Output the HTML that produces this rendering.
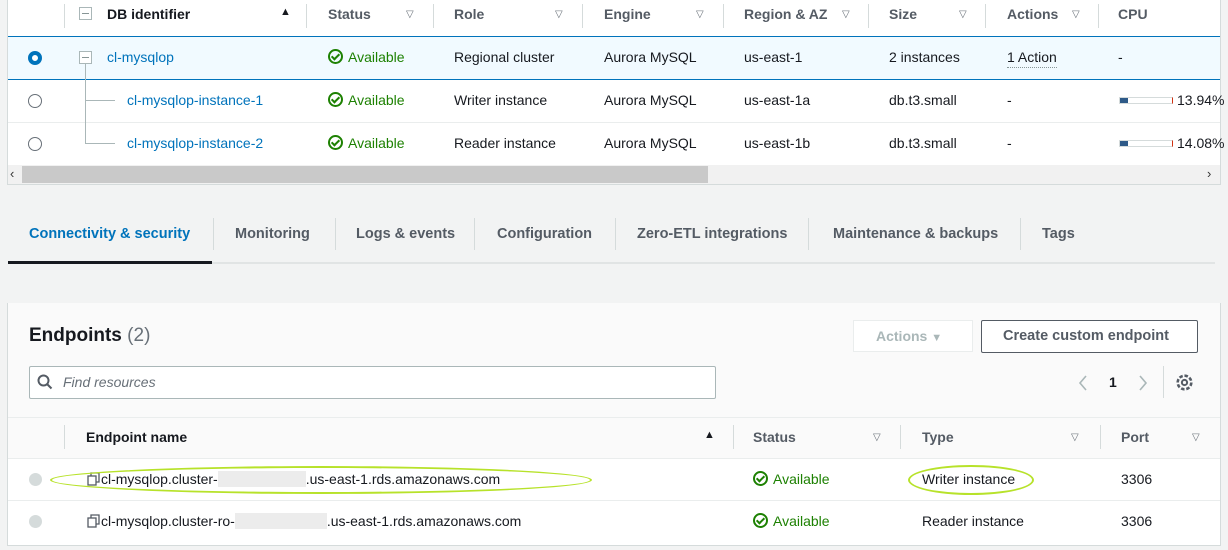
<!DOCTYPE html>
<html><head><meta charset="utf-8"><style>
*{box-sizing:border-box;margin:0;padding:0}
body{width:1228px;height:550px;background:#f2f3f3;font-family:"Liberation Sans",sans-serif;font-size:14px;color:#16191f;position:relative;overflow:hidden}
.a{position:absolute;white-space:nowrap}
.b{font-weight:bold}
.lnk{color:#0073bb}
.g{color:#1d8102}
.hd{color:#545b64;font-weight:bold}
.sep{position:absolute;width:1px;background:#d5dbdb}
.tri{position:absolute;font-size:10px;color:#687078}
.radio{position:absolute;width:14px;height:14px;border:1.5px solid #687078;border-radius:50%;background:#fff}
.chk{display:inline-block;width:15px;height:15px;border:2px solid #1d8102;border-radius:50%;position:relative;vertical-align:-2px;margin-right:5px}
.chk:after{content:"";position:absolute;left:3px;top:1px;width:3px;height:6px;border:solid #1d8102;border-width:0 2px 2px 0;transform:rotate(45deg)}
.row{position:absolute;left:8px;width:1212px;border-top:1px solid #eaeded;background:#fff}
</style></head><body>
<!-- top table -->
<div class="a" style="left:7px;top:0;width:1214px;height:185px;background:#fff;border:1px solid #d5dbdb;border-top:none"></div>
<div class="a" style="left:8px;top:36px;width:1212px;height:44px;background:#f1faff;border-top:1px solid #0073bb;border-bottom:1px solid #0073bb"></div>
<div class="row" style="top:122px;height:1px"></div>
<!-- header -->
<div class="sep" style="left:64px;top:4px;height:24px"></div>
<div class="a" style="left:79px;top:7px;width:13px;height:13px;border:1px solid #aab7b8"></div><div class="a" style="left:82px;top:13px;width:7px;height:1px;background:#879596"></div>
<div class="a b" style="left:107px;top:6px">DB identifier</div><div class="a" style="left:280px;top:6px;font-size:11px">▲</div>
<div class="sep" style="left:306px;top:4px;height:24px"></div>
<div class="a hd" style="left:328px;top:6px">Status</div><div class="tri" style="left:406px;top:9px">▽</div>
<div class="sep" style="left:433px;top:4px;height:24px"></div>
<div class="a hd" style="left:454px;top:6px">Role</div><div class="tri" style="left:555px;top:9px">▽</div>
<div class="sep" style="left:582px;top:4px;height:24px"></div>
<div class="a hd" style="left:604px;top:6px">Engine</div><div class="tri" style="left:696px;top:9px">▽</div>
<div class="sep" style="left:723px;top:4px;height:24px"></div>
<div class="a hd" style="left:744px;top:6px">Region &amp; AZ</div><div class="tri" style="left:842px;top:9px">▽</div>
<div class="sep" style="left:868px;top:4px;height:24px"></div>
<div class="a hd" style="left:889px;top:6px">Size</div><div class="tri" style="left:959px;top:9px">▽</div>
<div class="sep" style="left:985px;top:4px;height:24px"></div>
<div class="a hd" style="left:1007px;top:6px">Actions</div><div class="tri" style="left:1072px;top:9px">▽</div>
<div class="sep" style="left:1098px;top:4px;height:24px"></div>
<div class="a hd" style="left:1118px;top:6px">CPU</div>
<!-- row1 -->
<div class="a" style="left:28px;top:51px;width:14px;height:14px;border-radius:50%;border:4px solid #0073bb;background:#fff"></div>
<div class="a" style="left:79px;top:51px;width:13px;height:13px;border:1px solid #aab7b8;background:#fff"></div><div class="a" style="left:82px;top:57px;width:7px;height:1px;background:#879596"></div>
<div class="a" style="left:85px;top:64px;width:1px;height:80px;background:#aab7b8"></div>
<div class="a" style="left:85px;top:100px;width:30px;height:1px;background:#aab7b8"></div>
<div class="a" style="left:85px;top:143px;width:30px;height:1px;background:#aab7b8"></div>
<div class="a lnk" style="left:107px;top:49px">cl-mysqlop</div>
<div class="a g" style="left:328px;top:49px"><span class="chk"></span>Available</div>
<div class="a" style="left:454px;top:49px">Regional cluster</div>
<div class="a" style="left:604px;top:49px">Aurora MySQL</div>
<div class="a" style="left:744px;top:49px">us-east-1</div>
<div class="a" style="left:889px;top:49px">2 instances</div>
<div class="a" style="left:1007px;top:49px;border-bottom:1px dotted #879596;padding-bottom:2px">1 Action</div>
<div class="a" style="left:1118px;top:49px">-</div>
<!-- row2 -->
<div class="radio" style="left:28px;top:94px"></div>
<div class="a lnk" style="left:127px;top:92px">cl-mysqlop-instance-1</div>
<div class="a g" style="left:328px;top:92px"><span class="chk"></span>Available</div>
<div class="a" style="left:454px;top:92px">Writer instance</div>
<div class="a" style="left:604px;top:92px">Aurora MySQL</div>
<div class="a" style="left:744px;top:92px">us-east-1a</div>
<div class="a" style="left:889px;top:92px">db.t3.small</div>
<div class="a" style="left:1007px;top:92px">-</div>
<div class="a" style="left:1119px;top:97px;width:54px;height:7px;border:1px solid #d5dbdb;border-right-color:#d13212"><div style="width:8px;height:5px;background:#2e5a88"></div></div>
<div class="a" style="left:1177px;top:92px">13.94%</div>
<!-- row3 -->
<div class="radio" style="left:28px;top:137px"></div>
<div class="a lnk" style="left:127px;top:135px">cl-mysqlop-instance-2</div>
<div class="a g" style="left:328px;top:135px"><span class="chk"></span>Available</div>
<div class="a" style="left:454px;top:135px">Reader instance</div>
<div class="a" style="left:604px;top:135px">Aurora MySQL</div>
<div class="a" style="left:744px;top:135px">us-east-1b</div>
<div class="a" style="left:889px;top:135px">db.t3.small</div>
<div class="a" style="left:1007px;top:135px">-</div>
<div class="a" style="left:1119px;top:140px;width:54px;height:7px;border:1px solid #d5dbdb;border-right-color:#d13212"><div style="width:8px;height:5px;background:#2e5a88"></div></div>
<div class="a" style="left:1177px;top:135px">14.08%</div>
<!-- scrollbar -->
<div class="a" style="left:8px;top:165px;width:1212px;height:19px;background:#f1f1f1"></div>
<div class="a" style="left:22px;top:166px;width:686px;height:17px;background:#c9c9c9"></div>
<div class="a" style="left:10px;top:166px;font-size:13px;color:#333">‹</div>
<div class="a" style="left:1207px;top:166px;font-size:13px;color:#333">›</div>
<!-- tabs -->
<div class="a" style="left:8px;top:262px;width:1207px;height:2px;background:#e1e4e4"></div>
<div class="a" style="left:8px;top:261px;width:204px;height:3px;background:#16191f"></div>
<div class="a b lnk" style="left:29px;top:226px;font-size:14.5px">Connectivity &amp; security</div>
<div class="sep" style="left:213px;top:218px;height:32px"></div>
<div class="a hd" style="left:235px;top:226px;font-size:14.5px">Monitoring</div>
<div class="sep" style="left:335px;top:218px;height:32px"></div>
<div class="a hd" style="left:356px;top:226px;font-size:14.5px">Logs &amp; events</div>
<div class="sep" style="left:474px;top:218px;height:32px"></div>
<div class="a hd" style="left:497px;top:226px;font-size:14.5px">Configuration</div>
<div class="sep" style="left:615px;top:218px;height:32px"></div>
<div class="a hd" style="left:637px;top:226px;font-size:14.5px">Zero-ETL integrations</div>
<div class="sep" style="left:808px;top:218px;height:32px"></div>
<div class="a hd" style="left:833px;top:226px;font-size:14.5px">Maintenance &amp; backups</div>
<div class="sep" style="left:1020px;top:218px;height:32px"></div>
<div class="a hd" style="left:1042px;top:226px;font-size:14.5px">Tags</div>
<!-- endpoints -->
<div class="a" style="left:7px;top:303px;width:1214px;height:243px;background:#fafafa;border:1px solid #d5dbdb;border-top:none"></div>
<div class="a" style="left:29px;top:325px;font-size:19px"><b>Endpoints</b> <span style="color:#687078">(2)</span></div>
<div class="a" style="left:853px;top:320px;width:120px;height:32px;background:#fff;border:1px solid #eaeded;color:#aab7b8;font-weight:bold;padding:7px 0 0 22px">Actions <span style="font-size:11px">▼</span></div>
<div class="a" style="left:981px;top:320px;width:217px;height:33px;background:#fff;border:1px solid #545b64;border-radius:2px;color:#545b64;font-weight:bold;font-size:14.5px;padding:7px 0 0 21px">Create custom endpoint</div>
<div class="a" style="left:29px;top:366px;width:687px;height:33px;background:#fff;border:1px solid #aab7b8;border-radius:2px"></div>
<svg class="a" style="left:37px;top:374px" width="16" height="16"><circle cx="6.5" cy="6.5" r="5" fill="none" stroke="#545b64" stroke-width="2"/><path d="M10 10l4.5 4.5" stroke="#545b64" stroke-width="2"/></svg>
<div class="a" style="left:63px;top:374px;color:#687078;font-style:italic">Find resources</div>
<svg class="a" style="left:1077px;top:374px" width="12" height="18"><path d="M9 2L3 9l6 7" fill="none" stroke="#aab7b8" stroke-width="1.6"/></svg>
<div class="a b" style="left:1109px;top:374px">1</div>
<svg class="a" style="left:1137px;top:374px" width="12" height="18"><path d="M3 2l6 7-6 7" fill="none" stroke="#aab7b8" stroke-width="1.6"/></svg>
<div class="sep" style="left:1163px;top:366px;height:32px"></div>
<svg class="a" style="left:1175px;top:373px" width="19" height="19" viewBox="0 0 19 19"><circle cx="9.5" cy="9.5" r="6.8" fill="none" stroke="#545b64" stroke-width="2.6" stroke-dasharray="3.5 1.8"/><circle cx="9.5" cy="9.5" r="2.6" fill="none" stroke="#545b64" stroke-width="2"/></svg>
<div class="a" style="left:8px;top:417px;width:1212px;height:1px;background:#eaeded"></div>
<div class="a" style="left:8px;top:458px;width:1212px;height:87px;background:#fff;border-top:1px solid #eaeded"></div>
<div class="a" style="left:8px;top:500px;width:1212px;height:1px;background:#eaeded"></div>
<div class="sep" style="left:64px;top:425px;height:24px"></div>
<div class="a b" style="left:86px;top:429px">Endpoint name</div><div class="a" style="left:704px;top:429px;font-size:11px">▲</div>
<div class="sep" style="left:733px;top:425px;height:24px"></div>
<div class="a hd" style="left:753px;top:429px">Status</div><div class="tri" style="left:873px;top:432px">▽</div>
<div class="sep" style="left:900px;top:425px;height:24px"></div>
<div class="a hd" style="left:922px;top:429px">Type</div><div class="tri" style="left:1071px;top:432px">▽</div>
<div class="sep" style="left:1100px;top:425px;height:24px"></div>
<div class="a hd" style="left:1121px;top:429px">Port</div><div class="tri" style="left:1192px;top:432px">▽</div>
<!-- ep rows -->
<div class="a" style="left:29px;top:473px;width:13px;height:13px;border-radius:50%;background:#d5dbdb"></div>
<div class="a" style="left:29px;top:515px;width:13px;height:13px;border-radius:50%;background:#d5dbdb"></div>
<svg class="a" style="left:87px;top:472px" width="14" height="14"><rect x="1" y="4" width="8" height="9" fill="#fff" stroke="#545b64" stroke-width="1.3"/><path d="M4 4V1h8v9H9" fill="none" stroke="#545b64" stroke-width="1.3"/></svg>
<div class="a" style="left:101px;top:471px">cl-mysqlop.cluster-<span style="display:inline-block;width:88px;height:16px;background:#ececec;vertical-align:-3px"></span>.us-east-1.rds.amazonaws.com</div>
<svg class="a" style="left:87px;top:514px" width="14" height="14"><rect x="1" y="4" width="8" height="9" fill="#fff" stroke="#545b64" stroke-width="1.3"/><path d="M4 4V1h8v9H9" fill="none" stroke="#545b64" stroke-width="1.3"/></svg>
<div class="a" style="left:101px;top:513px">cl-mysqlop.cluster-ro-<span style="display:inline-block;width:92px;height:16px;background:#ececec;vertical-align:-3px"></span>.us-east-1.rds.amazonaws.com</div>
<div class="a" style="left:50px;top:466px;width:542px;height:28px;border:2.5px solid #b7e22a;border-radius:50%"></div>
<div class="a g" style="left:753px;top:471px"><span class="chk"></span>Available</div>
<div class="a g" style="left:753px;top:513px"><span class="chk"></span>Available</div>
<div class="a" style="left:922px;top:471px">Writer instance</div>
<div class="a" style="left:908px;top:465px;width:126px;height:30px;border:2.5px solid #b7e22a;border-radius:50%"></div>
<div class="a" style="left:922px;top:513px">Reader instance</div>
<div class="a" style="left:1121px;top:471px">3306</div>
<div class="a" style="left:1121px;top:513px">3306</div>
</body></html>
